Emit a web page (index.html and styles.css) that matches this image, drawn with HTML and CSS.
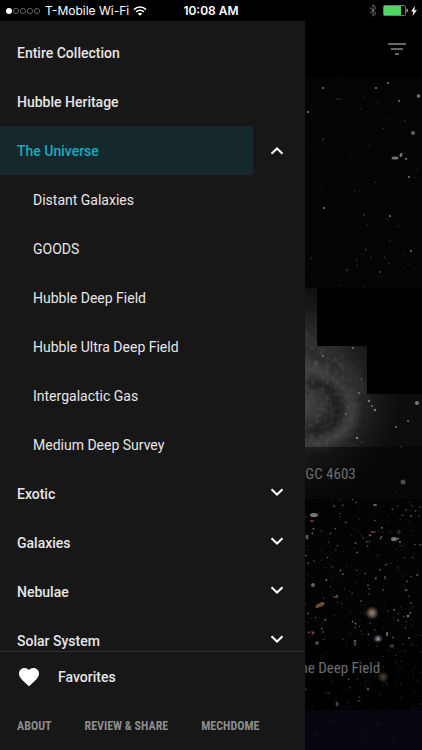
FILE: index.html
```html
<!DOCTYPE html>
<html lang="en">
<head>
    <meta charset="UTF-8">
    <meta name="viewport" content="width=device-width, initial-scale=1.0">
    <title>Hubble Gallery</title>
    <link rel="stylesheet" href="styles.css">
</head>
<body>
    <div class="status-bar">
        <div class="status-left">
            <svg class="signal" width="36" height="8" viewBox="0 0 36 8">
                <circle cx="4" cy="4" r="3" fill="#fff"/>
                <g fill="none" stroke="#777" stroke-width="0.8">
                    <circle cx="11" cy="4" r="2.6"/>
                    <circle cx="18" cy="4" r="2.6"/>
                    <circle cx="25" cy="4" r="2.6"/>
                    <circle cx="32" cy="4" r="2.6"/>
                </g>
            </svg>
            <span>T-Mobile Wi-Fi</span>
            <svg width="14" height="10" viewBox="0 0 14 10">
                <g fill="none" stroke="#fff" stroke-width="1.5">
                    <path d="M1 3.6a8.5 8.5 0 0 1 12 0"/>
                    <path d="M3.2 5.9a5.4 5.4 0 0 1 7.6 0"/>
                </g>
                <path d="M7 9.8L4.9 7.7a3 3 0 0 1 4.2 0z" fill="#fff"/>
            </svg>
        </div>
        <span class="clock">10:08 AM</span>
        <div class="status-right">
            <svg width="8" height="13" viewBox="0 0 8 13">
                <path d="M0.8 3.6L7 9.3L4 12.2V0.8L7 3.7L0.8 9.4" fill="none" stroke="#777" stroke-width="0.9"/>
            </svg>
            <svg class="battery" width="26" height="11" viewBox="0 0 26 11">
                <rect x="0.5" y="0.5" width="22" height="10" rx="1" fill="none" stroke="#777"/>
                <rect x="1" y="1" width="17" height="9" fill="#4cd964"/>
                <path d="M23.5 3.5c2 0.6 2 3.4 0 4z" fill="#aaa"/>
            </svg>
            <svg width="6" height="10" viewBox="0 0 6 10">
                <path d="M3.8 0L0.2 5.6h2.2L1.6 10L5.8 4.2H3.4z" fill="#fff"/>
            </svg>
        </div>
    </div>

    <header class="toolbar">
        <button class="filter-button" type="button" aria-label="Filter">
            <svg width="20" height="14" viewBox="0 0 20 14">
                <path d="M1 1h18v2H1zM4 6h12v2H4zM8 11h4v2H8z" fill="#666"/>
            </svg>
        </button>
    </header>

    <main class="gallery">
        <a class="card" href="#">
            <svg class="photo" viewBox="0 0 422 211" preserveAspectRatio="xMidYMid slice">
                <rect width="422" height="211" fill="#040405"/>
                <g class="specks" data-seed="7" data-count="400" data-light="0.35"></g>
                <g fill="#777">
                    <circle cx="418.5" cy="19" r="1.8"/>
                    <circle cx="413" cy="56" r="2" fill="#6b6254"/>
                    <ellipse cx="395" cy="81" rx="3.5" ry="1.5"/>
                    <ellipse cx="401" cy="78" rx="1.4" ry="2" transform="rotate(30 401 78)"/>
                    <circle cx="406" cy="82" r="1.3" fill="#665748"/>
                    <circle cx="409" cy="100" r="1"/>
                    <circle cx="323" cy="11" r="1"/>
                    <circle cx="376" cy="11" r="1"/>
                    <circle cx="388" cy="6" r="1"/>
                    <circle cx="399" cy="24" r="1"/>
                    <circle cx="308" cy="35" r="1"/>
                    <circle cx="324" cy="131" r="1"/>
                    <circle cx="390" cy="139" r="1.2" fill="#555"/>
                    <circle cx="411" cy="174" r="1"/>
                    <circle cx="380" cy="195" r="1" fill="#444"/>
                </g>
            </svg>
        </a>
        <a class="card" href="#">
            <svg class="photo" viewBox="0 0 422 211" preserveAspectRatio="xMidYMid slice">
                <defs>
                    <radialGradient id="spiral" gradientUnits="userSpaceOnUse" cx="285" cy="108" r="115">
                        <stop offset="0" stop-color="#505050"/>
                        <stop offset="0.25" stop-color="#3c3c3c"/>
                        <stop offset="0.45" stop-color="#292929"/>
                        <stop offset="0.6" stop-color="#292929"/>
                        <stop offset="0.8" stop-color="#181818"/>
                        <stop offset="1" stop-color="#0d0d0d"/>
                    </radialGradient>
                    <radialGradient id="fade" gradientUnits="userSpaceOnUse" cx="285" cy="108" r="100">
                        <stop offset="0.5" stop-color="#fff"/>
                        <stop offset="1" stop-color="#000"/>
                    </radialGradient>
                    <mask id="grain-mask">
                        <rect width="422" height="211" fill="url(#fade)"/>
                    </mask>
                    <filter id="soft" x="-20%" y="-20%" width="140%" height="140%">
                        <feGaussianBlur stdDeviation="4"/>
                    </filter>
                    <filter id="grain" x="0" y="0" width="100%" height="100%">
                        <feTurbulence type="fractalNoise" baseFrequency="0.2" numOctaves="3" seed="4"/>
                        <feColorMatrix values="0 0 0 0 0.5  0 0 0 0 0.5  0 0 0 0 0.5  1.6 0 0 0 -0.7"/>
                    </filter>
                </defs>
                <rect width="422" height="211" fill="url(#spiral)"/>
                <g fill="none" filter="url(#soft)">
                    <path d="M300 75C335 88 356 108 351 129C346 150 320 158 295 157" stroke="#454545" stroke-width="9"/>
                    <path d="M306 97C328 90 344 108 340 125C336 142 318 146 308 143" stroke="#1c1c1c" stroke-width="12"/>
                    <path d="M302 48C325 62 350 80 364 105" stroke="#323232" stroke-width="7"/>
                </g>
                <g mask="url(#grain-mask)">
                    <rect width="422" height="211" filter="url(#grain)" opacity="0.2"/>
                </g>
                <g class="specks" data-seed="19" data-count="160" data-light="0.4"></g>
                <path d="M317 0H422V106H367V58H317z" fill="#000"/>
                <g fill="#777">
                    <circle cx="417" cy="115" r="2"/>
                    <circle cx="403" cy="194" r="2.5" fill="#999"/>
                    <circle cx="369" cy="113" r="1.2"/>
                    <circle cx="375" cy="122" r="1.3"/>
                    <circle cx="372" cy="118" r="1"/>
                    <circle cx="357" cy="150" r="1.3"/>
                    <circle cx="408" cy="133" r="1"/>
                    <circle cx="396" cy="139" r="1"/>
                    <circle cx="323" cy="68" r="1"/>
                    <circle cx="353" cy="60" r="1"/>
                    <circle cx="346" cy="126" r="1"/>
                    <circle cx="359" cy="105" r="1"/>
                </g>
            </svg>
            <span class="caption">NGC 4603</span>
        </a>
        <a class="card" href="#">
            <svg class="photo" viewBox="0 0 422 211" preserveAspectRatio="xMidYMid slice">
                <defs>
                    <radialGradient id="glow-warm">
                        <stop offset="0" stop-color="#9a8372"/>
                        <stop offset="0.4" stop-color="#6c594b"/>
                        <stop offset="1" stop-color="#5c493b" stop-opacity="0"/>
                    </radialGradient>
                    <radialGradient id="glow-cool">
                        <stop offset="0" stop-color="#a5a5af"/>
                        <stop offset="0.4" stop-color="#585860"/>
                        <stop offset="1" stop-color="#484850" stop-opacity="0"/>
                    </radialGradient>
                </defs>
                <rect width="422" height="211" fill="#030304"/>
                <g class="specks" data-seed="31" data-count="1500" data-light="0.75"></g>
                <circle cx="372" cy="114" r="7" fill="url(#glow-warm)"/>
                <circle cx="383" cy="178" r="6" fill="url(#glow-warm)"/>
                <circle cx="378" cy="140" r="5" fill="url(#glow-cool)"/>
                <circle cx="392" cy="147" r="3" fill="url(#glow-cool)"/>
                <ellipse cx="320" cy="106" rx="5" ry="2" fill="#6b4a38" transform="rotate(-25 320 106)"/>
                <ellipse cx="336" cy="98" rx="3" ry="1" fill="#5a453a"/>
                <ellipse cx="314" cy="16" rx="4" ry="2" fill="#777"/>
                <ellipse cx="312" cy="22" rx="2" ry="1" fill="#6b3f3a"/>
                <ellipse cx="394" cy="40" rx="3" ry="2" fill="#777"/>
                <ellipse cx="373" cy="33" rx="3" ry="1" fill="#6a302e"/>
                <ellipse cx="375" cy="6" rx="2" ry="1" fill="#5d6878"/>
                <circle cx="313" cy="86" r="2" fill="#526670"/>
                <circle cx="313" cy="134" r="1.6" fill="#7e3a3a"/>
                <circle cx="317" cy="144" r="2" fill="#888"/>
                <ellipse cx="307" cy="38" rx="1.5" ry="2.5" fill="#6b574d"/>
                <ellipse cx="355" cy="144" rx="1.5" ry="3" fill="#77778a"/>
                <ellipse cx="387" cy="135" rx="1.2" ry="2.5" fill="#6b5548"/>
                <circle cx="383" cy="91" r="1" fill="#7a3030"/>
                <circle cx="408" cy="117" r="1.3" fill="#777"/>
                <ellipse cx="337" cy="205" rx="1.5" ry="2.5" fill="#6f8ba6"/>
                <circle cx="368" cy="190" r="1.5" fill="#94808a"/>
            </svg>
            <span class="caption">the Deep Field<br>&nbsp;</span>
        </a>
        <a class="card" href="#">
            <svg class="photo" viewBox="0 0 422 211" preserveAspectRatio="xMidYMid slice">
                <rect width="422" height="211" fill="#06060e"/>
                <g fill="#0a0a1a">
                    <circle cx="331" cy="11" r="3"/>
                    <circle cx="361" cy="26" r="3"/>
                    <circle cx="378" cy="14" r="3"/>
                    <circle cx="393" cy="30" r="3"/>
                    <circle cx="316" cy="24" r="3" fill="#12080f"/>
                    <circle cx="407" cy="20" r="2" fill="#12080f"/>
                </g>
            </svg>
        </a>
    </main>

    <aside class="drawer">
        <nav class="collections">
            <ul class="menu">
                <li><a class="item" href="#">Entire Collection</a></li>
                <li><a class="item" href="#">Hubble Heritage</a></li>
                <li>
                    <div class="group">
                        <a class="item active" href="#">The Universe</a>
                        <button class="toggle open" type="button" aria-label="Collapse The Universe">
                            <svg width="14" height="8" viewBox="0 0 14 8"><path d="M1.5 1.2L7 6.5L12.5 1.2"/></svg>
                        </button>
                    </div>
                    <ul class="submenu">
                        <li><a class="subitem" href="#">Distant Galaxies</a></li>
                        <li><a class="subitem" href="#">GOODS</a></li>
                        <li><a class="subitem" href="#">Hubble Deep Field</a></li>
                        <li><a class="subitem" href="#">Hubble Ultra Deep Field</a></li>
                        <li><a class="subitem" href="#">Intergalactic Gas</a></li>
                        <li><a class="subitem" href="#">Medium Deep Survey</a></li>
                    </ul>
                </li>
                <li class="group">
                    <a class="item" href="#">Exotic</a>
                    <button class="toggle" type="button" aria-label="Expand Exotic">
                        <svg width="14" height="8" viewBox="0 0 14 8"><path d="M1.5 1.2L7 6.5L12.5 1.2"/></svg>
                    </button>
                </li>
                <li class="group">
                    <a class="item" href="#">Galaxies</a>
                    <button class="toggle" type="button" aria-label="Expand Galaxies">
                        <svg width="14" height="8" viewBox="0 0 14 8"><path d="M1.5 1.2L7 6.5L12.5 1.2"/></svg>
                    </button>
                </li>
                <li class="group">
                    <a class="item" href="#">Nebulae</a>
                    <button class="toggle" type="button" aria-label="Expand Nebulae">
                        <svg width="14" height="8" viewBox="0 0 14 8"><path d="M1.5 1.2L7 6.5L12.5 1.2"/></svg>
                    </button>
                </li>
                <li class="group">
                    <a class="item" href="#">Solar System</a>
                    <button class="toggle" type="button" aria-label="Expand Solar System">
                        <svg width="14" height="8" viewBox="0 0 14 8"><path d="M1.5 1.2L7 6.5L12.5 1.2"/></svg>
                    </button>
                </li>
            </ul>
        </nav>
        <footer class="drawer-footer">
            <a class="favorites" href="#">
                <svg width="24" height="24" viewBox="0 0 24 24">
                    <path d="M12 21.35l-1.45-1.32C5.4 15.36 2 12.28 2 8.5 2 5.42 4.42 3 7.5 3c1.74 0 3.41.81 4.5 2.09C13.09 3.81 14.76 3 16.5 3 19.58 3 22 5.42 22 8.5c0 3.78-3.4 6.86-8.55 11.54L12 21.35z" fill="#fff"/>
                </svg>
                Favorites
            </a>
            <div class="links">
                <a href="#">ABOUT</a>
                <a href="#">REVIEW &amp; SHARE</a>
                <a href="#">MECHDOME</a>
            </div>
        </footer>
    </aside>

    <script src="stars.js"></script>
</body>
</html>
```
FILE: styles.css
```css
* {
    box-sizing: border-box;
}

body {
    margin: 0;
    height: 100vh;
    display: flex;
    flex-direction: column;
    overflow: hidden;
    background-color: #000;
    color: #e6e6e6;
    font-family: Roboto, "Liberation Sans", sans-serif;
    font-size: 14px;
}

a {
    color: inherit;
    text-decoration: none;
}

button {
    border: none;
    padding: 0;
    background: none;
    cursor: pointer;
}

ul {
    list-style: none;
    margin: 0;
    padding: 0;
}

svg {
    display: block;
}

/* status bar */
.status-bar {
    flex: none;
    display: grid;
    grid-template-columns: 1fr auto 1fr;
    align-items: center;
    height: 21px;
    padding: 0 5px;
    color: #fff;
    font-family: Inter, Roboto, sans-serif;
    font-size: 12px;
}

.status-left,
.status-right {
    display: flex;
    align-items: center;
    gap: 4px;
}

.status-right {
    justify-content: flex-end;
}

.battery {
    margin: 0 -2px 0 2px;
}

.clock {
    font-weight: 600;
}

/* gallery */
.toolbar {
    flex: none;
    display: flex;
    justify-content: flex-end;
    align-items: center;
    height: 56px;
    padding-right: 15px;
}

.filter-button {
    padding: 8px 0;
}

.gallery {
    flex: 1;
    min-height: 0;
    overflow: hidden;
}

.card {
    display: grid;
    aspect-ratio: 2 / 1;
    overflow: hidden;
}

.photo,
.caption {
    grid-area: 1 / 1;
}

.photo {
    width: 100%;
    height: 100%;
}

.caption {
    align-self: end;
    padding: 19px 40px 16px 296px;
    background-color: rgba(0, 0, 0, 0.5);
    color: #6c6c6c;
    font-family: "Roboto Condensed", "Liberation Sans Narrow", Roboto, sans-serif;
    font-size: 15px;
    line-height: 17px;
    white-space: nowrap;
}

/* drawer */
.drawer {
    position: fixed;
    top: 21px;
    bottom: 0;
    left: 0;
    width: 305px;
    max-width: 80vw;
    display: flex;
    flex-direction: column;
    background-color: #171717;
}

.collections {
    flex: 1;
    min-height: 0;
    overflow: hidden;
    padding-top: 7px;
}

.group {
    display: flex;
}

.item {
    flex: 1;
    display: flex;
    align-items: center;
    height: 49px;
    padding-left: 17px;
    font-weight: 500;
}

.item.active {
    background-color: #15292d;
    color: #14abc0;
}

.toggle {
    display: flex;
    justify-content: center;
    align-items: center;
    width: 52px;
    padding: 0 4px 3px 0;
}

.toggle.open {
    padding-bottom: 0;
}

.toggle path {
    fill: none;
    stroke: #fff;
    stroke-width: 2;
}

.toggle.open svg {
    transform: rotate(180deg);
}

.subitem {
    display: flex;
    align-items: center;
    height: 49px;
    padding-left: 33px;
}

.drawer-footer {
    flex: none;
    border-top: 1px solid #333;
}

.favorites {
    display: flex;
    align-items: center;
    gap: 17px;
    height: 49px;
    padding-left: 17px;
    font-weight: 500;
}

.links {
    display: flex;
    align-items: center;
    gap: 33px;
    height: 49px;
    padding-left: 17px;
    color: #8c8c8c;
    font-family: "Roboto Condensed", "Liberation Sans Narrow", Roboto, sans-serif;
    font-size: 12px;
    font-weight: 700;
}
```
FILE: stars.js
```js
// scatter faint stars over each photo
document.querySelectorAll('.specks').forEach((group) => {
    let seed = Number(group.dataset.seed);
    const count = Number(group.dataset.count);
    const light = Number(group.dataset.light);
    const colors = ['#aaa', '#aaa', '#8d9ab5', '#a99c92', '#a08078'];

    const random = () => {
        seed = (seed * 16807) % 2147483647;
        return seed / 2147483647;
    };

    for (let i = 0; i < count; i++) {
        const star = document.createElementNS('http://www.w3.org/2000/svg', 'circle');
        star.setAttribute('cx', random() * 422);
        star.setAttribute('cy', random() * 211);
        star.setAttribute('r', 0.4 + random() * 0.6);
        star.setAttribute('fill', colors[Math.floor(random() * colors.length)]);
        star.setAttribute('opacity', random() * light);
        group.appendChild(star);
    }
});
```
